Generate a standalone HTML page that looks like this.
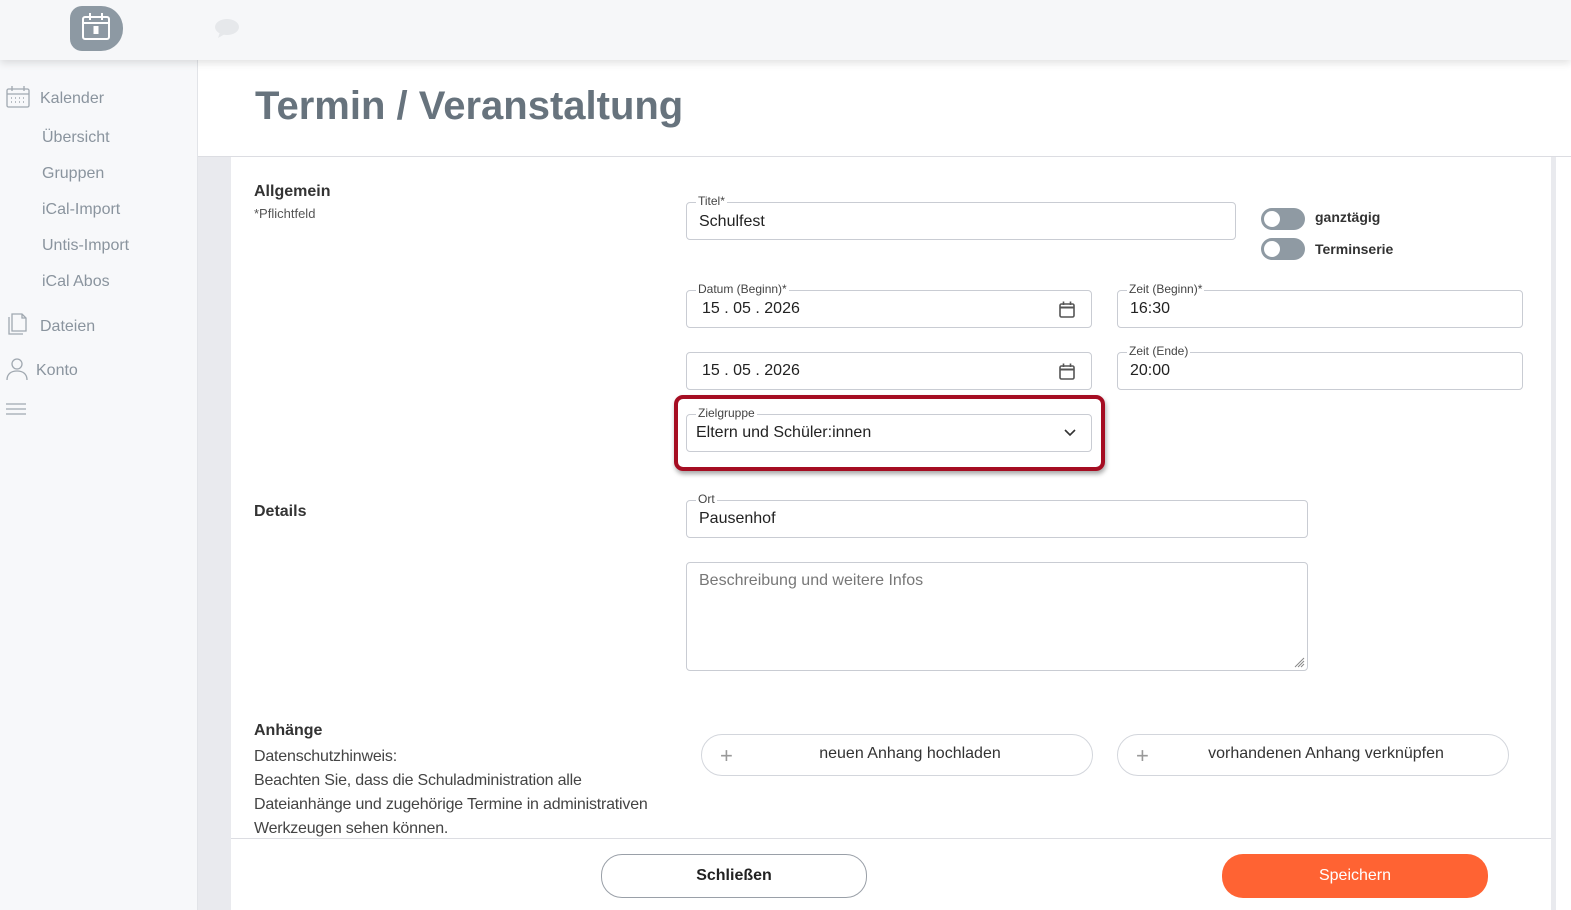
<!DOCTYPE html>
<html><head><meta charset="utf-8">
<style>
*{box-sizing:border-box;margin:0;padding:0}
body{width:1571px;height:910px;position:relative;overflow:hidden;font-family:"Liberation Sans",Arial,sans-serif;background:#e9eaee;color:#333}
.a{position:absolute}
#top{left:0;top:0;width:1571px;height:60px;background:#f6f7f9;box-shadow:0 3px 8px rgba(0,0,0,.12);z-index:3}
#side{left:0;top:60px;width:198px;height:850px;background:#f7f8fa;border-right:1px solid #e2e4e8}
.nav{position:absolute;color:#8a949e;font-size:16px}
#hdr{left:198px;top:60px;width:1373px;height:97px;background:#fff;border-bottom:1px solid #dcdde2}
#card{left:231px;top:157px;width:1320px;height:753px;background:#fff}
.h{font-weight:bold;font-size:16px;color:#333}
.f{position:absolute;border:1px solid #c9ccd3;border-radius:4px;background:#fff;font-size:16px;color:#222;padding-left:12px;display:flex;align-items:center}
.f .l{position:absolute;top:-9px;left:9px;font-size:12px;background:#fff;padding:0 2px;color:#444;line-height:14px}
.tg{position:absolute;width:44px;height:22px;border-radius:11px;background:#8f9aa3}
.tg::after{content:"";position:absolute;left:3px;top:3px;width:16px;height:16px;border-radius:50%;background:#fff}
.tl{position:absolute;font-weight:bold;font-size:14px;color:#333}
.pb{position:absolute;border:1px solid #d3d6dc;border-radius:21px;height:42px;font-size:16px;color:#333;display:flex;align-items:center;justify-content:center}
.pb .p{position:absolute;left:18px;top:8px;font-size:22px;color:#999;font-weight:300}
.cal{position:absolute;right:16px;top:10px}
</style></head><body>
<div id="top" class="a">
 <div class="a" style="left:70px;top:6px;width:53px;height:45px;background:#8d99a3;border-radius:12px 22px 22px 12px"></div>
 <svg class="a" style="left:80px;top:12px" width="32" height="30" viewBox="0 0 32 30" fill="none" stroke="#fff" stroke-width="2"><rect x="3" y="5" width="26" height="22" rx="2"/><line x1="3" y1="11" x2="29" y2="11"/><line x1="10" y1="1" x2="10" y2="8"/><line x1="22" y1="1" x2="22" y2="8"/><rect x="14.5" y="15" width="3" height="6" fill="#fff"/></svg>
 <svg class="a" style="left:214px;top:17px" width="26" height="22" viewBox="0 0 26 22"><ellipse cx="13" cy="10" rx="12" ry="8" fill="#e6e8eb"/><path d="M6 15 L4 21 L11 17Z" fill="#e6e8eb"/></svg>
</div>
<div id="side" class="a">
 <svg class="a" style="left:6px;top:25px" width="24" height="24" viewBox="0 0 24 24" fill="none" stroke="#a0a8b0" stroke-width="1.3"><rect x="1" y="4" width="22" height="18" rx="1.5"/><line x1="1" y1="9" x2="23" y2="9"/><line x1="6" y1="1" x2="6" y2="6"/><line x1="18" y1="1" x2="18" y2="6"/><g stroke-width="1.6"><path d="M5 13h1M9 13h1M13 13h1M17 13h1M5 17h1M9 17h1M13 17h1M17 17h1"/></g></svg>
 <div class="nav" style="left:40px;top:30px">Kalender</div>
 <div class="nav" style="left:42px;top:69px">Übersicht</div>
 <div class="nav" style="left:42px;top:105px">Gruppen</div>
 <div class="nav" style="left:42px;top:141px">iCal-Import</div>
 <div class="nav" style="left:42px;top:177px">Untis-Import</div>
 <div class="nav" style="left:42px;top:213px">iCal Abos</div>
 <svg class="a" style="left:6px;top:252px" width="24" height="24" viewBox="0 0 24 24" fill="none" stroke="#a0a8b0" stroke-width="1.3"><path d="M6 2h10l4 4v13H6z"/><path d="M16 2v4h4"/><path d="M3 5v17h14"/></svg>
 <div class="nav" style="left:40px;top:258px">Dateien</div>
 <svg class="a" style="left:6px;top:297px" width="22" height="24" viewBox="0 0 22 24" fill="none" stroke="#a0a8b0" stroke-width="1.3"><circle cx="11" cy="7" r="5"/><path d="M1 23c0-6 4-9 10-9s10 3 10 9"/></svg>
 <div class="nav" style="left:36px;top:302px">Konto</div>
 <svg class="a" style="left:6px;top:342px" width="20" height="14" viewBox="0 0 20 14" stroke="#a0a8b0" stroke-width="1.3"><path d="M0 2h20M0 7h20M0 12h20"/></svg>
</div>
<div id="hdr" class="a"><div class="a" style="left:57px;top:24px;font-size:40px;font-weight:bold;color:#67737d">Termin / Veranstaltung</div></div>
<div class="a" style="left:1551px;top:157px;width:5px;height:753px;background:#e9eaee"></div>
<div class="a" style="left:1556px;top:157px;width:15px;height:753px;background:#fff"></div>
<div id="card" class="a">
 <div class="a h" style="left:23px;top:26px">Allgemein</div>
 <div class="a" style="left:23px;top:49px;font-size:13px;color:#555">*Pflichtfeld</div>
 <div class="a h" style="left:23px;top:346px">Details</div>
 <div class="a h" style="left:23px;top:565px">Anhänge</div>
 <div class="a" style="left:23px;top:588px;font-size:16px;line-height:24px;color:#444;letter-spacing:-.2px">Datenschutzhinweis:<br>Beachten Sie, dass die Schuladministration alle<br>Dateianhänge und zugehörige Termine in administrativen<br>Werkzeugen sehen können.</div>
 <div class="a" style="left:0;top:681px;width:1320px;height:1px;background:#dcdde2"></div>
 <div class="pb" style="left:370px;top:697px;width:266px;height:44px;border-color:#9aa0a8;font-weight:bold;color:#222">Schließen</div>
 <div class="pb" style="left:991px;top:697px;width:266px;height:44px;border:0;background:#ff6333;color:#fff">Speichern</div>
</div>
<div class="f" style="left:686px;top:202px;width:550px;height:38px;padding-top:2px">Schulfest<span class="l">Titel*</span></div>
<div class="tg" style="left:1261px;top:208px"></div><div class="tl" style="left:1315px;top:209px">ganztägig</div>
<div class="tg" style="left:1261px;top:238px"></div><div class="tl" style="left:1315px;top:241px">Terminserie</div>
<div class="f" style="left:686px;top:290px;width:406px;height:38px;padding-left:15px">15 . 05 . 2026<span class="l">Datum (Beginn)*</span>
 <svg class="cal" width="16" height="17" viewBox="0 0 16 17" fill="none" stroke="#555" stroke-width="1.6"><rect x="1" y="3" width="14" height="13" rx="1.5"/><line x1="1" y1="6.5" x2="15" y2="6.5" stroke-width="2"/><line x1="4.5" y1="0.5" x2="4.5" y2="4"/><line x1="11.5" y1="0.5" x2="11.5" y2="4"/></svg></div>
<div class="f" style="left:1117px;top:290px;width:406px;height:38px">16:30<span class="l">Zeit (Beginn)*</span></div>
<div class="f" style="left:686px;top:352px;width:406px;height:38px;padding-left:15px">15 . 05 . 2026
 <svg class="cal" width="16" height="17" viewBox="0 0 16 17" fill="none" stroke="#555" stroke-width="1.6"><rect x="1" y="3" width="14" height="13" rx="1.5"/><line x1="1" y1="6.5" x2="15" y2="6.5" stroke-width="2"/><line x1="4.5" y1="0.5" x2="4.5" y2="4"/><line x1="11.5" y1="0.5" x2="11.5" y2="4"/></svg></div>
<div class="f" style="left:1117px;top:352px;width:406px;height:38px">20:00<span class="l">Zeit (Ende)</span></div>
<div class="a" style="left:674px;top:395px;width:431px;height:76px;border:4px solid #a50d22;border-radius:9px;box-shadow:1px 3px 5px rgba(0,0,0,.35)"></div>
<div class="f" style="left:686px;top:414px;width:406px;height:38px;padding-left:9px">Eltern und Schüler:innen<span class="l">Zielgruppe</span>
 <svg class="a" style="right:15px;top:14px" width="12" height="8" viewBox="0 0 12 8" fill="none" stroke="#333" stroke-width="1.6"><path d="M1 1l5 5 5-5"/></svg></div>
<div class="f" style="left:686px;top:500px;width:622px;height:38px">Pausenhof<span class="l">Ort</span></div>
<div class="f" style="left:686px;top:562px;width:622px;height:109px;align-items:flex-start;padding-top:9px;color:#777">Beschreibung und weitere Infos
 <svg class="a" style="right:2px;bottom:2px" width="12" height="12" viewBox="0 0 12 12" stroke="#888" stroke-width="1"><path d="M11 2L2 11M11 5L5 11M11 8L8 11"/></svg></div>
<div class="pb" style="left:701px;top:734px;width:392px;height:42px;padding-left:26px;padding-bottom:2px"><span class="p">+</span>neuen Anhang hochladen</div>
<div class="pb" style="left:1117px;top:734px;width:392px;height:42px;padding-left:26px;padding-bottom:2px"><span class="p">+</span>vorhandenen Anhang verknüpfen</div>
</body></html>
